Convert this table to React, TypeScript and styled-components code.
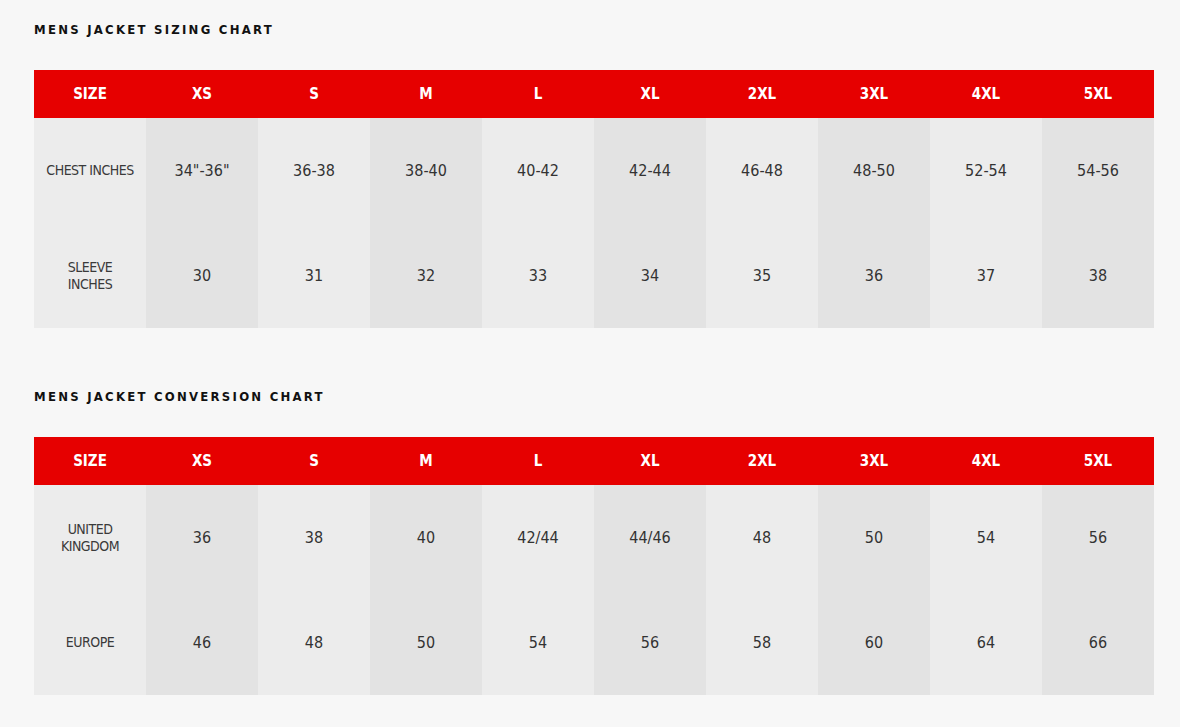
import styled, { createGlobalStyle } from "styled-components";

const GlobalStyle = createGlobalStyle`
  body {
    margin: 0;
    background: #f7f7f7;
    font-family: "DejaVu Sans Condensed", "DejaVu Sans", sans-serif;
  }
`;

const Page = styled.div`
  width: 1180px;
  min-height: 727px;
  padding: 20px 34px 30px;
  box-sizing: border-box;
  background: #f7f7f7;
`;

const Section = styled.section<{ $gap?: number }>`
  margin-top: ${(p) => p.$gap ?? 0}px;
`;

const Heading = styled.h2`
  margin: 0 0 30px;
  height: 20px;
  line-height: 20px;
  font-family: "DejaVu Sans Condensed", "DejaVu Sans", sans-serif;
  font-size: 13px;
  font-weight: 700;
  letter-spacing: 2.25px;
  color: #111;
`;

const Grid = styled.div`
  display: grid;
  grid-template-columns: repeat(10, 112px);
`;

const HeadCell = styled.div`
  height: 48px;
  display: flex;
  align-items: center;
  justify-content: center;
  background: #e60000;
  color: #fff;
  font-size: 15px;
  font-weight: 700;
`;

const Cell = styled.div<{ $dark: boolean; $label?: boolean }>`
  height: 105px;
  display: flex;
  align-items: center;
  justify-content: center;
  text-align: center;
  background: ${(p) => (p.$dark ? "#e3e3e3" : "#ececec")};
  color: ${(p) => (p.$label ? "#3a3a3a" : "#333")};
  font-size: ${(p) => (p.$label ? "14px" : "16px")};
  letter-spacing: ${(p) => (p.$label ? "-0.5px" : "0")};
  line-height: ${(p) => (p.$label ? "17px" : "20px")};
  padding: 0 8px;
`;

const sizes = ["XS", "S", "M", "L", "XL", "2XL", "3XL", "4XL", "5XL"];

type Row = { label: string[]; values: string[] };

const sizing: Row[] = [
  {
    label: ["CHEST INCHES"],
    values: ['34"-36"', "36-38", "38-40", "40-42", "42-44", "46-48", "48-50", "52-54", "54-56"],
  },
  {
    label: ["SLEEVE", "INCHES"],
    values: ["30", "31", "32", "33", "34", "35", "36", "37", "38"],
  },
];

const conversion: Row[] = [
  {
    label: ["UNITED", "KINGDOM"],
    values: ["36", "38", "40", "42/44", "44/46", "48", "50", "54", "56"],
  },
  {
    label: ["EUROPE"],
    values: ["46", "48", "50", "54", "56", "58", "60", "64", "66"],
  },
];

function Chart({ rows }: { rows: Row[] }) {
  return (
    <Grid>
      <HeadCell>SIZE</HeadCell>
      {sizes.map((s) => (
        <HeadCell key={s}>{s}</HeadCell>
      ))}
      {rows.map((row) => [
        <Cell key={row.label.join()} $dark={false} $label>
          <span>
            {row.label.map((l, i) => (
              <span key={l}>
                {i > 0 && <br />}
                {l}
              </span>
            ))}
          </span>
        </Cell>,
        ...row.values.map((v, i) => (
          <Cell key={row.label.join() + i} $dark={i % 2 === 0}>
            {v}
          </Cell>
        )),
      ])}
    </Grid>
  );
}

export default function App() {
  return (
    <>
      <GlobalStyle />
      <Page>
        <Section>
          <Heading>MENS JACKET SIZING CHART</Heading>
          <Chart rows={sizing} />
        </Section>
        <Section $gap={59}>
          <Heading>MENS JACKET CONVERSION CHART</Heading>
          <Chart rows={conversion} />
        </Section>
      </Page>
    </>
  );
}
